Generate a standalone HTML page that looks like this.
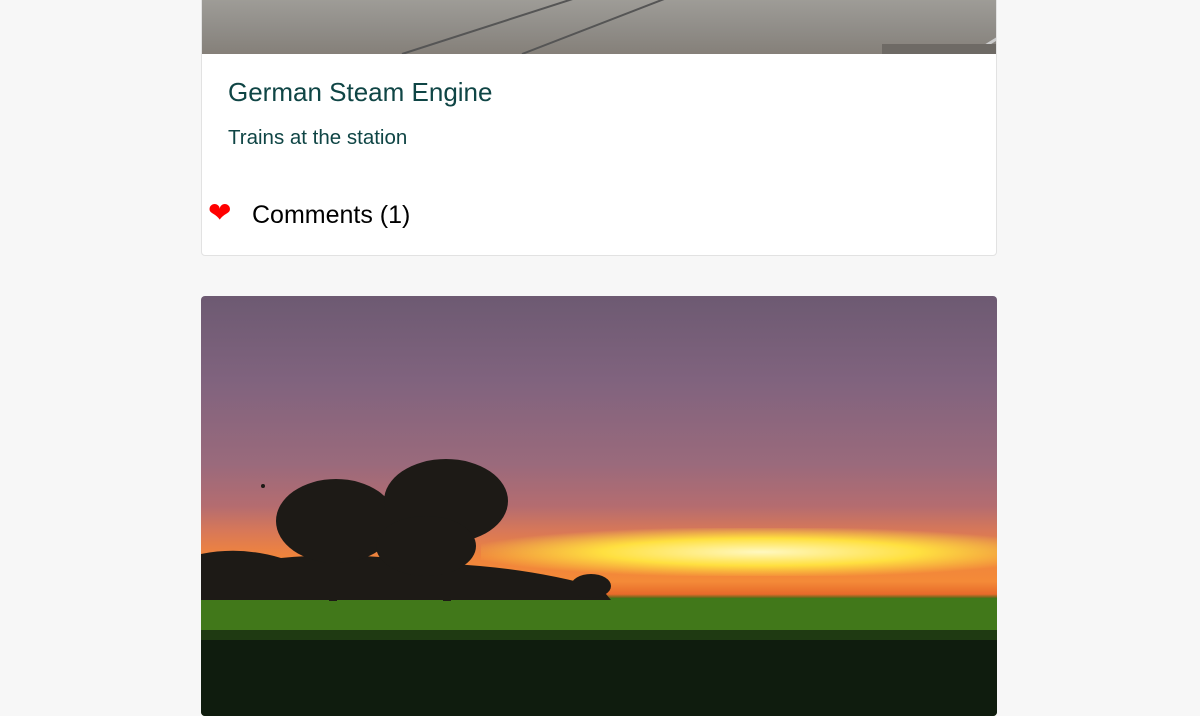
<!DOCTYPE html>
<html><head><style>
body{margin:0;background:#f7f7f7;width:1200px;height:700px;overflow:hidden;font-family:"Liberation Sans",sans-serif;position:relative}
.card{position:absolute;left:201px;width:796px;background:#fff;border:1px solid #e2e2e2;border-radius:4px;overflow:hidden;box-sizing:border-box}
</style></head><body>
<div class="card" style="top:-5px;height:261px;">
  <div style="height:58px;background:linear-gradient(180deg,#a09e99,#8f8c87 60%,#858079);position:relative;overflow:hidden">
    <svg width="796" height="58" style="position:absolute;left:0;top:0"><path d="M200 58 L380 0" stroke="#555" stroke-width="2"/><path d="M320 58 L470 0" stroke="#555" stroke-width="2"/><path d="M770 58 L796 42" stroke="#ccc" stroke-width="3"/><rect x="680" y="48" width="116" height="10" fill="#6e6a65"/></svg>
  </div>
  <div style="position:absolute;left:26px;top:81px;font-size:26px;color:#0f4545">German Steam Engine</div>
  <div style="position:absolute;left:26px;top:130px;font-size:20.5px;color:#0f4545">Trains at the station</div>
  <div style="position:absolute;left:6px;top:203px;font-size:28px;line-height:28px;color:#f00">❤</div>
  <div style="position:absolute;left:50px;top:205px;font-size:25px;color:#000">Comments (1)</div>
</div>
<div class="card" style="top:296px;height:420px;border:none;">
  <div style="position:absolute;inset:0;background:linear-gradient(180deg,#6d5a72 0%,#80637e 20%,#9a6a7c 40%,#b46c70 50%,#d87858 56%,#f0843c 62%,#f48a38 68%,#e86a2a 71%,#4a6a18 72%)"></div>
  <div style="position:absolute;left:280px;top:232px;width:560px;height:48px;background:radial-gradient(ellipse at center,#fff8c0 0%,#ffe040 40%,rgba(255,170,40,0) 75%)"></div>
  <div style="position:absolute;left:0;top:302px;width:796px;height:32px;background:#41781a"></div>
  <div style="position:absolute;left:0;top:334px;width:796px;height:10px;background:#1f3a12"></div>
  <div style="position:absolute;left:0;top:344px;width:796px;height:76px;background:#0f1c0e"></div>
  <svg width="796" height="420" style="position:absolute;left:0;top:0">
    <g fill="#1d1a16">
      <path d="M0 258 Q40 250 80 262 Q150 255 250 268 Q330 272 400 292 L410 304 L0 304Z"/>
      <ellipse cx="135" cy="225" rx="60" ry="42"/>
      <ellipse cx="245" cy="205" rx="62" ry="42"/>
      <ellipse cx="225" cy="250" rx="50" ry="30"/>
      <rect x="128" y="250" width="8" height="55"/>
      <rect x="242" y="240" width="8" height="65"/>
      <ellipse cx="390" cy="290" rx="20" ry="12"/>
      <circle cx="62" cy="190" r="2"/>
    </g>
  </svg>
</div>
</body></html>
